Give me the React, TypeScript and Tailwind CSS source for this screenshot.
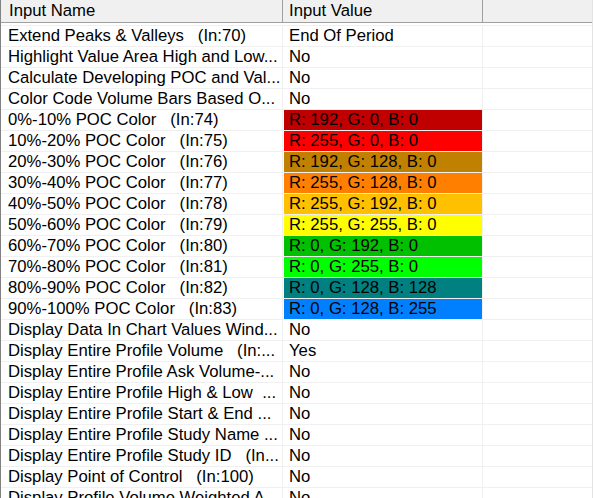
import React from 'react'

type Row = { name: string; value: string; color?: string }

const rows: Row[] = [
  { name: 'Extend Peaks & Valleys   (In:70)', value: 'End Of Period' },
  { name: 'Highlight Value Area High and Low...', value: 'No' },
  { name: 'Calculate Developing POC and Val...', value: 'No' },
  { name: 'Color Code Volume Bars Based O...', value: 'No' },
  { name: '0%-10% POC Color   (In:74)', value: 'R: 192, G: 0, B: 0', color: 'bg-[#c00000]' },
  { name: '10%-20% POC Color   (In:75)', value: 'R: 255, G: 0, B: 0', color: 'bg-[#ff0000]' },
  { name: '20%-30% POC Color   (In:76)', value: 'R: 192, G: 128, B: 0', color: 'bg-[#c08000]' },
  { name: '30%-40% POC Color   (In:77)', value: 'R: 255, G: 128, B: 0', color: 'bg-[#ff8000]' },
  { name: '40%-50% POC Color   (In:78)', value: 'R: 255, G: 192, B: 0', color: 'bg-[#ffc000]' },
  { name: '50%-60% POC Color   (In:79)', value: 'R: 255, G: 255, B: 0', color: 'bg-[#ffff00]' },
  { name: '60%-70% POC Color   (In:80)', value: 'R: 0, G: 192, B: 0', color: 'bg-[#00c000]' },
  { name: '70%-80% POC Color   (In:81)', value: 'R: 0, G: 255, B: 0', color: 'bg-[#00ff00]' },
  { name: '80%-90% POC Color   (In:82)', value: 'R: 0, G: 128, B: 128', color: 'bg-[#008080]' },
  { name: '90%-100% POC Color   (In:83)', value: 'R: 0, G: 128, B: 255', color: 'bg-[#0080ff]' },
  { name: 'Display Data In Chart Values Wind...', value: 'No' },
  { name: 'Display Entire Profile Volume   (In:...', value: 'Yes' },
  { name: 'Display Entire Profile Ask Volume-...', value: 'No' },
  { name: 'Display Entire Profile High & Low  ...', value: 'No' },
  { name: 'Display Entire Profile Start & End ...', value: 'No' },
  { name: 'Display Entire Profile Study Name ...', value: 'No' },
  { name: 'Display Entire Profile Study ID   (In...', value: 'No' },
  { name: 'Display Point of Control   (In:100)', value: 'No' },
  { name: 'Display Profile Volume Weighted A...', value: 'No' },
]

export default function App() {
  return (
    <div
      className="w-[593px] h-[498px] overflow-hidden bg-white border-l border-r border-l-[#828282] border-r-[#e3e3e3] text-black text-[16.7px]"
      style={{ fontFamily: '"Liberation Sans", Arial, sans-serif' }}
    >
      {/* header */}
      <div className="flex h-[23px] bg-[#f0f0f0] border-b border-[#a0a0a0]">
        <div className="w-[282px] border-r border-[#a0a0a0] pl-[8px] leading-[22px] whitespace-pre">Input Name</div>
        <div className="w-[200px] border-r border-[#a0a0a0] pl-[6px] leading-[22px] whitespace-pre">Input Value</div>
        <div className="flex-1" />
      </div>
      <div className="h-[2px]" />

      {rows.map((r, i) => (
        <div key={i} className="flex h-[21px] border-t border-[#f0f0f0]">
          <div className="w-[282px] shrink-0 border-r border-[#f0f0f0] pl-[7px] leading-[20px] whitespace-pre overflow-hidden">
            {r.name}
          </div>
          <div className="w-[200px] shrink-0 border-r border-[#f0f0f0] pl-px flex">
            <div className={`flex-1 pl-[5px] leading-[20px] whitespace-pre ${r.color ?? ''}`}>{r.value}</div>
          </div>
          <div className="flex-1" />
        </div>
      ))}
    </div>
  )
}
